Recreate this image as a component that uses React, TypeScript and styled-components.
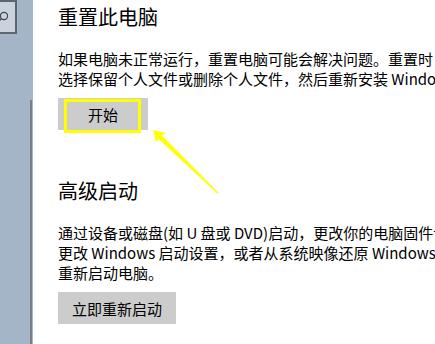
import React from 'react';
import styled, {createGlobalStyle} from 'styled-components';

const GlobalStyle = createGlobalStyle`
	html, body {
		margin: 0;
		padding: 0;
		background: #ffffff;
		overflow: hidden;
	}
	body {
		font-family: "Noto Sans CJK SC", "Liberation Sans", sans-serif;
		color: #000000;
	}
`;

const Page = styled.div`
	display: flex;
	width: 435px;
	height: 344px;
	overflow: hidden;
`;

const Sidebar = styled.div`
	flex: 0 0 33px;
	display: flex;
	flex-direction: column;
	background-color: #a4b5c8;
`;

const SearchBox = styled.div`
	width: 15px;
	height: 30px;
	border: 2px solid #5b6671;
	border-left: none;
	background-color: #c9d2dd;
	display: flex;
	align-items: center;
	overflow: hidden;
`;

const ScrollThumb = styled.div`
	align-self: flex-end;
	margin-top: auto;
	margin-right: 1px;
	width: 2px;
	height: 244px;
	background-color: #7a7f87;
`;

const Content = styled.main`
	flex: 1;
	padding: 3px 0 0 25px;
	overflow: hidden;
`;

const Section = styled.section<{gap: number}>`
	display: flex;
	flex-direction: column;
	align-items: flex-start;
	margin-top: ${p => p.gap}px;
`;

const Title = styled.h2`
	margin: 0 0 18px;
	font-size: 20px;
	line-height: 28px;
	font-weight: 400;
	white-space: nowrap;
`;

const Text = styled.p`
	margin: 0 0 8px;
	font-size: 15px;
	line-height: 20px;
	white-space: nowrap;
`;

const ButtonRow = styled.div`
	position: relative;
	margin-top: 1px;
`;

const GrayButton = styled.button`
	min-width: 90px;
	height: 32px;
	padding: 0 14px;
	border: none;
	background-color: #cccccc;
	font-family: inherit;
	font-size: 15px;
	color: #000000;
`;

const Highlight = styled.div`
	position: absolute;
	left: 6px;
	top: 1px;
	width: 71px;
	height: 28px;
	border: 3px solid #ffff00;
	pointer-events: none;
`;

const Arrow = styled.svg`
	position: absolute;
	left: 90px;
	top: 28px;
	pointer-events: none;
`;

const App = () => {
	return (
		<>
			<GlobalStyle/>
			<Page>
				<Sidebar>
					<SearchBox>
						<svg width="12" height="14" viewBox="0 0 12 14" style={{marginLeft: -4}}>
							<circle cx="8" cy="6" r="3.6" fill="none" stroke="#3c4650" strokeWidth="1.2"/>
							<line x1="5.4" y1="8.6" x2="1" y2="13" stroke="#3c4650" strokeWidth="1.3"/>
						</svg>
					</SearchBox>
					<ScrollThumb/>
				</Sidebar>
				<Content>
					<Section gap={0}>
						<Title>重置此电脑</Title>
						<Text>
							如果电脑未正常运行，重置电脑可能会解决问题。重置时，你可以<br/>
							选择保留个人文件或删除个人文件，然后重新安装 Windows。
						</Text>
						<ButtonRow>
							<GrayButton>开始</GrayButton>
							<Highlight/>
							<Arrow width="76" height="72" viewBox="0 0 76 72">
								<polygon points="5,4 18,7 13,10 8,16" fill="#ffff00"/>
								<polygon points="13,8.5 70.8,67 69.6,67.8 9.5,12" fill="#ffff00"/>
							</Arrow>
						</ButtonRow>
					</Section>
					<Section gap={47}>
						<Title>高级启动</Title>
						<Text>
							通过设备或磁盘(如 U 盘或 DVD)启动，更改你的电脑固件设置，<br/>
							更改 Windows 启动设置，或者从系统映像还原 Windows。这将<br/>
							重新启动电脑。
						</Text>
						<ButtonRow>
							<GrayButton>立即重新启动</GrayButton>
						</ButtonRow>
					</Section>
				</Content>
			</Page>
		</>
	);
};

export default App;
